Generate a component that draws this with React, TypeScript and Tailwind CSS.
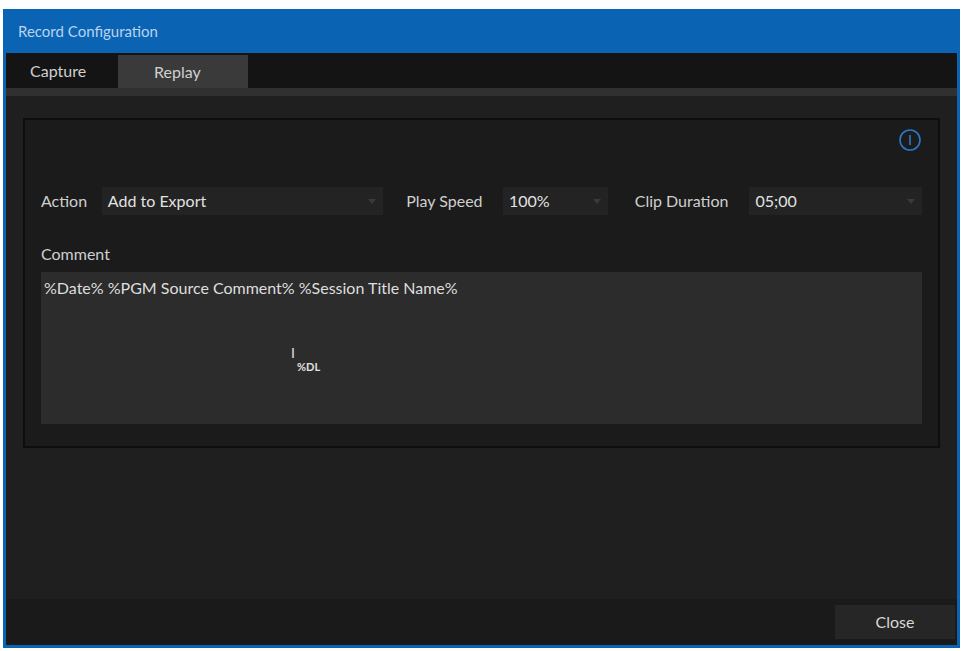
export default function App() {
  const font = { fontFamily: 'Lato, "Open Sans", "Liberation Sans", sans-serif' };
  const Caret = () => (
    <svg width="10" height="7" viewBox="0 0 10 7"><path d="M1 1 L5 6 L9 1 Z" fill="#3a3a3a" /></svg>
  );
  return (
    <div className="w-[964px] h-[651px] bg-white pt-[9px] px-[3px] pb-[3px]" style={font}>
      <div className="w-[957px] h-[639px] bg-[#0b63b3] p-[3px] pt-0 flex flex-col">
        <div className="h-[44px] flex items-center pl-[12px] text-[15px] text-[#b9d3ef]">Record Configuration</div>
        <div className="flex-1 bg-[#1f1f1f] flex flex-col">
          <div className="h-[35px] bg-[#141414] flex items-end text-[16px] text-[#d0d0d0]">
            <div className="h-[35px] w-[110px] flex items-center pl-[24px]">Capture</div>
            <div className="h-[33px] w-[130px] bg-[#3a3a3a] flex items-center pl-[36px] ml-[2px]">Replay</div>
          </div>
          <div className="h-[8px] bg-[#303030]" />
          <div className="flex-1 flex flex-col">
            <div className="mx-[17px] mt-[22px] h-[330px] bg-[#1b1b1b] border-2 border-[#0e0e0e] flex flex-col px-[16px]">
              <div className="flex justify-end pt-[8px]">
                <svg width="24" height="24" viewBox="0 0 24 24"><circle cx="12" cy="12" r="10" fill="none" stroke="#2b78c8" strokeWidth="1.6" /><rect x="11.2" y="7" width="1.6" height="10" fill="#2b78c8" /></svg>
              </div>
              <div className="mt-[35px] flex items-center text-[16px] text-[#cfcfcf] h-[28px]">
                <span className="w-[61px]">Action</span>
                <div className="w-[282px] h-[28px] bg-[#232323] flex items-center justify-between px-[6px]"><span className="text-[#e2e2e2]">Add to Export</span><Caret /></div>
                <span className="ml-[23px] w-[97px]">Play Speed</span>
                <div className="w-[105px] h-[28px] bg-[#232323] flex items-center justify-between px-[6px]"><span className="text-[#e2e2e2]">100%</span><Caret /></div>
                <span className="ml-[27px] w-[115px]">Clip Duration</span>
                <div className="w-[173px] h-[28px] bg-[#232323] flex items-center justify-between px-[6px]"><span className="text-[#e2e2e2]">05;00</span><Caret /></div>
              </div>
              <div className="mt-[27px] text-[16px] text-[#cfcfcf]">Comment</div>
              <div className="mt-[6px] h-[152px] bg-[#2c2c2c] px-[3px] pt-[4px] text-[16px] text-[#dedede] relative">
                %Date% %PGM Source Comment% %Session Title Name%
                <span className="absolute left-[250px] top-[70px] text-[14px] text-[#e0e0e0]">I</span>
                <span className="absolute left-[256px] top-[87px] text-[11px] font-bold text-[#e0e0e0]">%DL</span>
              </div>
            </div>
          </div>
          <div className="h-[46px] bg-[#1a1a1a] flex items-center justify-end pr-[2px]">
            <div className="w-[120px] h-[34px] bg-[#262626] flex items-center justify-center text-[16px] text-[#d8d8d8]">Close</div>
          </div>
        </div>
      </div>
    </div>
  );
}
